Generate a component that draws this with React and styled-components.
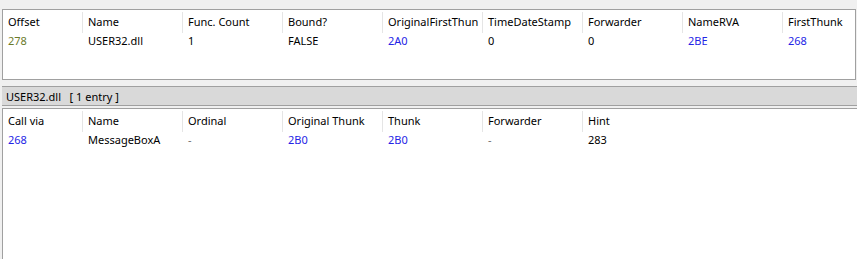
import React from 'react'
import styled, { createGlobalStyle } from 'styled-components'

const Global = createGlobalStyle`
  html, body {
    margin: 0;
    padding: 0;
    background: #f0f0f0;
    overflow: hidden;
  }
  body {
    font-family: "Segoe UI", "Noto Sans", "Liberation Sans", sans-serif;
    font-size: 11px;
    color: #000;
  }
`

const Window = styled.div`
  width: 857px;
  height: 259px;
  padding: 9px 0 0 2px;
  box-sizing: border-box;
  display: flex;
  flex-direction: column;
`

const Panel = styled.div`
  background: #fff;
  border-top: 1px solid #a0a0a0;
  border-left: 1px solid #a0a0a0;
  border-right: ${p => (p.$open ? 'none' : '1px solid #a0a0a0')};
  border-bottom: ${p => (p.$open ? 'none' : '1px solid #a0a0a0')};
  height: ${p => p.$h}px;
  flex: ${p => (p.$open ? '1' : 'none')};
  margin-right: ${p => (p.$open ? '0' : '1px')};
  overflow: hidden;
`

const Bar = styled.div`
  margin-top: 6px;
  height: 18px;
  border-top: 1px solid #a0a0a0;
  border-bottom: 1px solid #a0a0a0;
  background: #d9d9d9;
  display: flex;
  align-items: center;
  padding-left: 4px;
  white-space: pre;
  margin-bottom: 2px;
`

const HeaderRow = styled.div`
  display: flex;
  height: 23px;
  align-items: flex-end;
`

const HeadCell = styled.div`
  width: ${p => p.$w}px;
  flex: none;
  box-sizing: border-box;
  padding-left: 5px;
  height: 21px;
  line-height: 20px;
  border-right: ${p => (p.$last ? 'none' : '1px solid #e5e5e5')};
  white-space: nowrap;
  overflow: hidden;
`

const Row = styled.div`
  display: flex;
  height: 17px;
  margin-top: -1px;
  align-items: center;
`

const Cell = styled.div`
  width: ${p => p.$w}px;
  flex: none;
  box-sizing: border-box;
  padding-left: 5px;
  white-space: nowrap;
  color: ${p => (p.$tone === 'blue' ? '#2424e6' : p.$tone === 'olive' ? '#6b7a2a' : p.$tone === 'gray' ? '#707070' : '#000')};
`

const top = [
  { h: 'Offset', v: '278', t: 'olive', w: 80 },
  { h: 'Name', v: 'USER32.dll', w: 100 },
  { h: 'Func. Count', v: '1', w: 100 },
  { h: 'Bound?', v: 'FALSE', w: 100 },
  { h: 'OriginalFirstThun', v: '2A0', t: 'blue', w: 100 },
  { h: 'TimeDateStamp', v: '0', w: 100 },
  { h: 'Forwarder', v: '0', w: 100 },
  { h: 'NameRVA', v: '2BE', t: 'blue', w: 100 },
  { h: 'FirstThunk', v: '268', t: 'blue', w: 100 },
]

const bottom = [
  { h: 'Call via', v: '268', t: 'blue', w: 80 },
  { h: 'Name', v: 'MessageBoxA', w: 100 },
  { h: 'Ordinal', v: '-', t: 'gray', w: 100 },
  { h: 'Original Thunk', v: '2B0', t: 'blue', w: 100 },
  { h: 'Thunk', v: '2B0', t: 'blue', w: 100 },
  { h: 'Forwarder', v: '-', t: 'gray', w: 100 },
  { h: 'Hint', v: '283', w: 100 },
]

const Table = ({ cols }) => (
  <>
    <HeaderRow>
      {cols.map((c, i) => (
        <HeadCell key={i} $w={c.w} $last={i === cols.length - 1}>{c.h}</HeadCell>
      ))}
    </HeaderRow>
    <Row>
      {cols.map((c, i) => (
        <Cell key={i} $w={c.w} $tone={c.t}>{c.v}</Cell>
      ))}
    </Row>
  </>
)

export default function App() {
  return (
    <Window>
      <Global />
      <Panel $h={69}>
        <Table cols={top} />
      </Panel>
      <Bar>USER32.dll   [ 1 entry ]</Bar>
      <Panel $open>
        <Table cols={bottom} />
      </Panel>
    </Window>
  )
}
